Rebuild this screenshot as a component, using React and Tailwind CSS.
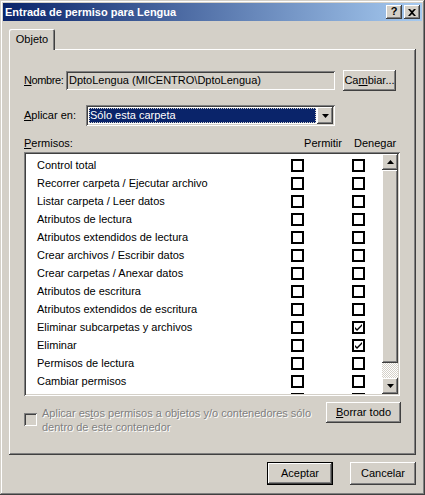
import React from 'react';

const raised = "shadow-[inset_-1px_-1px_#404040,inset_1px_1px_#ffffff,inset_-2px_-2px_#808080,inset_2px_2px_#d4d0c8]";
const sunken = "shadow-[inset_1px_1px_#808080,inset_-1px_-1px_#ffffff,inset_2px_2px_#404040,inset_-2px_-2px_#d4d0c8]";

// la última fila solo asoma por debajo, no se ve el texto
const permisos = [
    { name: 'Control total' },
    { name: 'Recorrer carpeta / Ejecutar archivo' },
    { name: 'Listar carpeta / Leer datos' },
    { name: 'Atributos de lectura' },
    { name: 'Atributos extendidos de lectura' },
    { name: 'Crear archivos / Escribir datos' },
    { name: 'Crear carpetas / Anexar datos' },
    { name: 'Atributos de escritura' },
    { name: 'Atributos extendidos de escritura' },
    { name: 'Eliminar subcarpetas y archivos', deny: true },
    { name: 'Eliminar', deny: true },
    { name: 'Permisos de lectura' },
    { name: 'Cambiar permisos' },
    { name: '' },
];

const Arrow = ({ up }) => (
    <svg width="7" height="4" viewBox="0 0 7 4" className="block">
        {up ? <path d="M3.5 0 L7 4 L0 4 Z" fill="#000" /> : <path d="M0 0 L7 0 L3.5 4 Z" fill="#000" />}
    </svg>
);

const Check = ({ checked }) => (
    <div className="w-[13px] h-[13px] border-2 border-black bg-white flex items-center justify-center shrink-0">
        {checked && (
            <svg width="7" height="7" viewBox="0 0 7 7" className="block">
                <path d="M0 3 L0 5 L2 7 L7 2 L7 0 L2 5 Z" fill="#000" />
            </svg>
        )}
    </div>
);

const Button = ({ children, className = "" }) => (
    <div className={`bg-[#d4d0c8] flex items-center justify-center ${raised} ${className}`}>{children}</div>
);

export default function App() {
    return (
        <div
            className="w-[425px] h-[495px] bg-[#d4d0c8] p-[3px] flex flex-col text-[11px] leading-[13px] text-black shadow-[inset_-1px_-1px_#404040,inset_1px_1px_#d4d0c8,inset_-2px_-2px_#808080,inset_2px_2px_#ffffff]"
            style={{ fontFamily: '"Liberation Sans", Arial, sans-serif' }}
        >
            {/* barra de título */}
            <div className="h-[18px] flex items-center pl-[2px] pr-[2px] bg-[linear-gradient(to_right,#0a246a,#a6caf0)]">
                <span className="flex-1 text-white font-bold text-[11px]">Entrada de permiso para Lengua</span>
                <Button className="w-[16px] h-[14px] font-bold text-[11px] leading-none pb-[1px]">?</Button>
                <Button className="w-[16px] h-[14px] ml-[2px]">
                    <svg width="8" height="7" viewBox="0 0 8 7" className="block">
                        <path d="M0 0 H2 L4 2 L6 0 H8 L5 3.5 L8 7 H6 L4 5 L2 7 H0 L3 3.5 Z" fill="#000" />
                    </svg>
                </Button>
            </div>

            <div className="flex-1 flex flex-col px-[6px] pt-[8px]">
                {/* pestaña */}
                <div className="flex">
                    <div className="relative z-10 w-[46px] h-[21px] -mb-[1px] bg-[#d4d0c8] rounded-t-[2px] flex items-start justify-center pt-[4px] shadow-[inset_1px_1px_#ffffff,inset_-1px_0_#404040,inset_-2px_0_#808080]">
                        Objeto
                    </div>
                </div>

                <div className="h-[406px] flex flex-col pt-[21px] pl-[15px] pr-[15px] shadow-[inset_-1px_-1px_#404040,inset_1px_1px_#ffffff,inset_-2px_-2px_#808080]">
                    {/* Nombre */}
                    <div className="h-[21px] flex items-center">
                        <span className="w-[42px] whitespace-nowrap tracking-[-0.4px]"><u>N</u>ombre:</span>
                        <div className={`w-[269px] h-[19px] flex items-center pl-[3px] ${sunken}`}>
                            DptoLengua (MICENTRO\DptoLengua)
                        </div>
                        <Button className="ml-[8px] w-[53px] h-[21px]">Ca<u>m</u>biar...</Button>
                    </div>

                    {/* Aplicar en */}
                    <div className="h-[21px] mt-[14px] flex items-center">
                        <span className="w-[62px]"><u>A</u>plicar en:</span>
                        <div className={`w-[249px] h-[21px] bg-white p-[2px] flex ${sunken}`}>
                            <div className="flex-1 my-[1px] mx-[1px] bg-[#0a246a] text-white flex items-center pl-[1px] outline outline-1 outline-dotted outline-[#d4d0c8] -outline-offset-1">
                                Sólo esta carpeta
                            </div>
                            <Button className="w-[16px] h-[17px]">
                                <Arrow />
                            </Button>
                        </div>
                    </div>

                    {/* Permisos cabecera */}
                    <div className="h-[13px] mt-[11px] flex items-center">
                        <span className="flex-1"><u>P</u>ermisos:</span>
                        <span className="w-[40px] text-center">Permitir</span>
                        <span className="w-[40px] ml-[11px] mr-[7px] text-center">Denegar</span>
                    </div>

                    {/* lista */}
                    <div className={`mt-[2px] w-[376px] h-[244px] bg-white p-[2px] flex ${sunken}`}>
                        <div className="flex-1 overflow-hidden pt-[2px]">
                            {permisos.map((p, i) => (
                                <div key={i} className="h-[18px] flex items-center">
                                    <span className="w-[265px] pl-[11px] whitespace-nowrap">{p.name}</span>
                                    <Check checked={p.allow} />
                                    <span className="w-[48px]" />
                                    <Check checked={p.deny} />
                                </div>
                            ))}
                        </div>
                        <div className="w-[16px] flex flex-col">
                            <Button className="h-[16px]"><Arrow up /></Button>
                            <div className={`h-[193px] bg-[#d4d0c8] ${raised}`} />
                            <div className="h-[15px] bg-[repeating-conic-gradient(#d4d0c8_0_25%,#ffffff_0_50%)] bg-[length:2px_2px]" />
                            <Button className="h-[16px]"><Arrow /></Button>
                        </div>
                    </div>

                    {/* parte inferior */}
                    <div className="mt-[6px] flex items-start">
                        <div className={`mt-[11px] w-[13px] h-[13px] bg-[#d4d0c8] ${sunken}`} />
                        <div className="ml-[5px] mt-[4px] leading-[14px] text-[#808080] [text-shadow:1px_1px_0_#ffffff] flex-1">
                            Aplicar es<u>t</u>os permisos a objetos y/o contenedores sólo<br />
                            dentro de este contenedor
                        </div>
                        <Button className="w-[75px] h-[21px]"><u>B</u>orrar todo</Button>
                    </div>
                </div>

                {/* botones */}
                <div className="mt-[7px] flex justify-end gap-[17px]">
                    <div className="w-[66px] h-[23px] border border-black">
                        <Button className="w-full h-full">Aceptar</Button>
                    </div>
                    <Button className="w-[66px] h-[23px]">Cancelar</Button>
                </div>
            </div>
        </div>
    );
}
